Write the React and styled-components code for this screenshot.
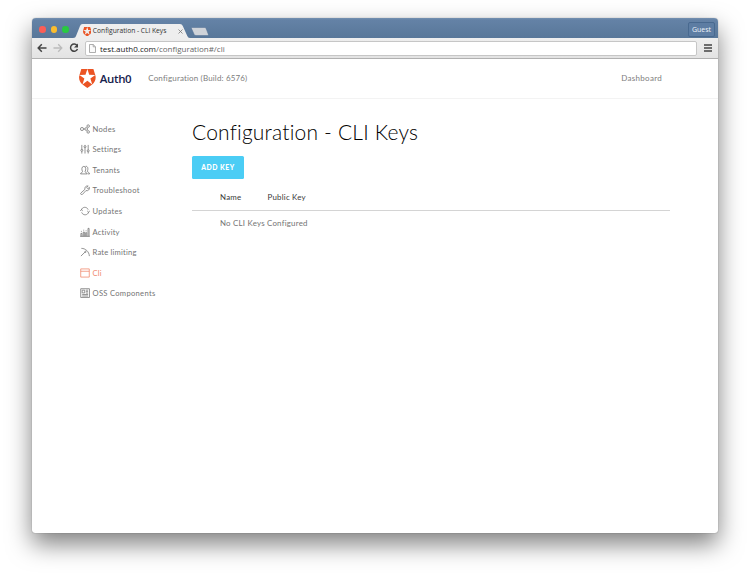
import React from "react";
import styled, { createGlobalStyle } from "styled-components";

const Global = createGlobalStyle`
  * { box-sizing: border-box; }
  body { margin: 0; background: #fff; overflow: hidden; font-family: Lato, "Liberation Sans", sans-serif; }
  svg { display: block; flex: none; }
`;

const Desktop = styled.div`
  height: 579px;
  padding: 18px 32px 46px;
  background: #fff;
`;
const Window = styled.div`
  width: 686px;
  height: 515px;
  border-radius: 4px 4px 3px 3px;
  background: #fff;
  box-shadow: 0 0 1px rgba(0, 0, 0, 0.5), 0 11px 25px rgba(0, 0, 0, 0.5);
  overflow: hidden;
`;
const TitleBar = styled.div`
  height: 20px;
  display: flex;
  align-items: flex-end;
  padding: 0 3px 0 7px;
  background: linear-gradient(#7590b0 0, #6482a6 2px, #587799 100%);
`;
const Lights = styled.div`
  display: flex;
  gap: 5px;
  height: 17px;
  align-items: center;
`;
const Light = styled.i`
  width: 6.5px;
  height: 6.5px;
  border-radius: 50%;
  background: ${(p) => p.$color};
`;
const Tab = styled.div`
  position: relative;
  width: 117px;
  height: 14px;
  margin-left: 4px;
  display: flex;
  align-items: center;
  padding: 0 7px 0 10px;
`;
const TabShape = styled.svg`
  position: absolute;
  left: 0;
  top: 0;
`;
const TabTitle = styled.span`
  position: relative;
  flex: 1;
  margin-left: 2px;
  font: 6.7px/14px "Open Sans", sans-serif;
  letter-spacing: -0.02px;
  color: #333;
  white-space: nowrap;
`;
const TabIcon = styled.span`
  position: relative;
  margin-top: 1px;
`;
const NewTab = styled.svg`
  margin: 0 0 2px 0;
`;
const Guest = styled.div`
  width: 27px;
  height: 15px;
  margin: 0 0 1px auto;
  border: 1px solid #48698f;
  border-radius: 2px;
  background: #5d7da3;
  color: #eef3f9;
  font: 7px/13px "Open Sans", sans-serif;
  text-align: center;
`;
const Toolbar = styled.div`
  height: 21px;
  display: flex;
  align-items: center;
  padding: 0 6px 0 5px;
  background: linear-gradient(#eeeeee, #e3e3e3);
  border-bottom: 1px solid #b1b1b1;
`;
const Nav = styled.div`
  display: flex;
  gap: 6px;
  width: 48px;
`;
const Address = styled.div`
  flex: 1;
  height: 15px;
  margin-right: 7px;
  display: flex;
  align-items: center;
  padding-left: 3px;
  border: 1px solid #c6c6c6;
  border-radius: 2px;
  background: #fff;
  font: 8px/13px "Open Sans", sans-serif;
  color: #666;
`;
const Host = styled.span`
  margin-left: 4px;
  color: #222;
`;
const Header = styled.header`
  height: 40px;
  display: flex;
  align-items: center;
  padding: 0 56px 1px 47px;
  border-bottom: 1px solid #f3f3f3;
`;
const Wordmark = styled.strong`
  width: 45px;
  margin-left: 4px;
  padding-top: 1px;
  font: 600 11.5px/16px "Open Sans", sans-serif;
  letter-spacing: -0.35px;
  color: #16214d;
`;
const HeaderText = styled.span`
  margin-left: ${(p) => p.$left};
  font-size: 8px;
  letter-spacing: ${(p) => p.$track};
  color: #7d7d7d;
`;
const Content = styled.div`
  display: flex;
  padding: 19px 48px 0;
`;
const Side = styled.nav`
  width: 112px;
  padding-top: 0.4px;
`;
const Item = styled.div`
  height: 20.6px;
  display: flex;
  align-items: center;
  gap: 2.5px;
  font-size: 7.6px;
  letter-spacing: ${(p) => p.$track};
  color: ${(p) => (p.$active ? "#f0876b" : "#747474")};
`;
const Main = styled.main`
  width: 478px;
`;
const Title = styled.h1`
  margin: 0;
  height: 38px;
  font-size: 21px;
  line-height: 28px;
  font-weight: 300;
  letter-spacing: 0.2px;
  color: #000;
`;
const Button = styled.button`
  display: block;
  width: 52px;
  height: 23px;
  padding: 0;
  border: 0;
  border-radius: 1.5px;
  background: #4bcdf5;
  color: #fff;
  font: 900 6.8px/23px Lato, sans-serif;
  letter-spacing: 0.5px;
`;
const Row = styled.div`
  display: grid;
  grid-template-columns: ${(p) => (p.$head ? "47.5px 1fr" : "1fr")};
  align-items: center;
  padding-left: 28px;
  height: ${(p) => (p.$head ? "32px" : "24px")};
  padding-top: ${(p) => (p.$head ? "5px" : "0")};
  border-bottom: ${(p) => (p.$head ? "1px solid #d4d4d4" : "0")};
  font-size: 7.9px;
  letter-spacing: 0.22px;
  color: ${(p) => (p.$head ? "#3a3a3a" : "#747474")};
`;

const Shield = ({ height }) => (
  <svg width={height * 0.88} height={height} viewBox="1.44 0 21.12 24">
    <path d="M19.620 0H4.347L2.020 7.448h19.960Z" fill="#fff" />
    <path
      d="M21.980 7.448L19.620 0H4.347L2.020 7.448c-1.352 4.312.03 9.206 3.815 12.015L12.007 24l6.157-4.552c3.755-2.810 5.182-7.688 3.815-12.015l-6.160 4.580 2.343 7.450-6.157-4.597-6.158 4.580 2.358-7.433-6.188-4.550 7.630-.045L12.008 0l2.356 7.404 7.615.044z"
      fill="#eb5424"
    />
  </svg>
);

const shapes = {
  nodes: <><circle cx="2.2" cy="5.5" r="1.7" /><circle cx="6.800" cy="5.500" r="1.500" /><circle cx="9" cy="2.300" r="1.400" /><circle cx="9" cy="8.700" r="1.400" /><path d="M4 5.500h1.300" /></>,
  settings: <><path d="M2 1v5M2 8v2.500M5.500 1v1M5.500 4v6.500M9 1v5.500M9 8.500v2" /><circle cx="2" cy="7" r="1.100" /><circle cx="5.500" cy="3" r="1.100" /><circle cx="9" cy="7.500" r="1.100" /></>,
  tenants: <path d="M.6 9.800c0-1.600 2.200-1.200 2.200-2.600C1.600 5.200 1.700 1.500 4.200 1.500S6.800 5.200 5.600 7.200c0 1.400 2.300 1 2.300 2.600ZM6 1.500C8.800.8 9.300 4.700 8 6.800c0 1.300 2.500 1 2.500 3H8.600" />,
  wrench: <path d="M1 8.800 5.400 4.800C4.800 2.400 6.800.5 9 1.100L7.300 2.800l1.300 1.300 1.800-1.500c.5 2.400-1.600 4.200-3.900 3.600L2.700 10.300C1.400 11 0 9.800 1 8.800Z" />,
  updates: <><path d="M1.500 4.500C2.300.6 7.600.5 9 4M9.500 6.500C8.700 10.600 3.200 10.700 1.800 7" /><path d="m.2 5.300 1.300-1.200L3 5.300M8 5.500l1.400 1.200 1.400-1.200" /></>,
  activity: <path d="M1 10.200V7h1.200v3.200M3.600 10.200V5.500h1.200v4.700M6.200 10.200V6.200h1.200v4M8.800 10.200V1.500H10v8.700M.2 10.300h10.600M1 4.800h1M3.600 3.500h1M6.200 4.200h1" />,
  rate: <><path d="M1.500 1.500C6 1.500 10 5 10.300 10M1 10l4.600-4.500" /><circle cx="6" cy="5.300" r=".7" /></>,
  cli: <path d="M.8 1h9.400v9H.8ZM.8 3.600h9.400" />,
  oss: <path d="M.8.8h9.600v9.600H.8ZM2.400 2.400h2.800v3H2.400ZM6.500 2.400h2.400M6.500 4h2.400M6.500 5.600h2.400M2.400 7.200h6.500M2.400 8.800h6.500" />,
};
const Icon = ({ name }) => (
  <svg width="10" height="10" viewBox="0 0 11 11" fill="none" stroke="currentColor" strokeWidth=".85">{shapes[name]}</svg>
);
const items = [
  ["nodes", "Nodes", ".3px"],
  ["settings", "Settings", ".25px"],
  ["tenants", "Tenants", ".25px"],
  ["wrench", "Troubleshoot", ".3px"],
  ["updates", "Updates", ".3px"],
  ["activity", "Activity", ".2px"],
  ["rate", "Rate limiting", ".2px"],
  ["cli", "Cli", ".25px"],
  ["oss", "OSS Components", ".3px"],
];

export default function App() {
  return (
    <Desktop>
      <Global />
      <Window>
        <TitleBar>
          <Lights>
            <Light $color="#fb5e57" />
            <Light $color="#fbbd2e" />
            <Light $color="#29c941" />
          </Lights>
          <Tab>
            <TabShape width="117" height="14" viewBox="0 0 117 14">
              <path d="M0 14c2 0 2.500-1 3-2L7 2Q7.700 0 9.500 0H107q2 0 2.800 2l4.500 10q.8 2 2.500 2Z" fill="#eee" />
            </TabShape>
            <TabIcon><Shield height={9.5} /></TabIcon>
            <TabTitle>Configuration - CLI Keys</TabTitle>
            <TabIcon>
              <svg width="5" height="5" viewBox="0 0 5 5"><path d="m.5.5 4 4m0-4-4 4" stroke="#777" strokeWidth=".8" /></svg>
            </TabIcon>
          </Tab>
          <NewTab width="19" height="9" viewBox="0 0 19 9">
            <path d="M2 .5h12.500q1.200 0 1.600 1l2.300 6q.3 1-1 1H6q-1.300 0-1.800-1l-2.700-6Q1 .5 2 .5Z" fill="#cfd3d9" stroke="#506e92" strokeWidth=".5" />
          </NewTab>
          <Guest>Guest</Guest>
        </TitleBar>
        <Toolbar>
          <Nav>
            <svg width="10" height="10" viewBox="0 0 10 10" fill="none" stroke="#444" strokeWidth="1.500"><path d="M9.500 5H1.300M4.800 1.300 1.200 5l3.600 3.700" /></svg>
            <svg width="10" height="10" viewBox="0 0 10 10" fill="none" stroke="#bbb" strokeWidth="1.300"><path d="M.5 5h8.200M5.200 1.300 8.800 5 5.200 8.700" /></svg>
            <svg width="10" height="10" viewBox="0 0 10 10" fill="none" stroke="#444" strokeWidth="1.500"><path d="M8 2.500A3.600 3.600 0 1 0 8.500 6" /><path d="M9 .5v4H5Z" fill="#444" stroke="none" /></svg>
          </Nav>
          <Address>
            <svg width="7" height="9" viewBox="0 0 7 9" fill="#fafafa" stroke="#999" strokeWidth=".8"><path d="M.5.5h3.700l2.300 2.300v5.700h-6ZM4.200.5v2.300h2.300" /></svg>
            <Host>test.auth0.com</Host>/configuration#/cli
          </Address>
          <svg width="8" height="8" viewBox="0 0 8 8"><path d="M0 1h8M0 4h8M0 7h8" stroke="#444" strokeWidth="1.600" /></svg>
        </Toolbar>
        <Header>
          <Shield height={19} />
          <Wordmark>Auth0</Wordmark>
          <HeaderText $left="3.5px" $track=".16px">Configuration (Build: 6576)</HeaderText>
          <HeaderText $left="auto" $track=".3px">Dashboard</HeaderText>
        </Header>
        <Content>
          <Side>
            {items.map(([icon, label, track]) => (
              <Item key={icon} $active={icon === "cli"} $track={track}>
                <Icon name={icon} />
                {label}
              </Item>
            ))}
          </Side>
          <Main>
            <Title>Configuration - CLI Keys</Title>
            <Button>ADD KEY</Button>
            <Row $head><span>Name</span><span>Public Key</span></Row>
            <Row>No CLI Keys Configured</Row>
          </Main>
        </Content>
      </Window>
    </Desktop>
  );
}
